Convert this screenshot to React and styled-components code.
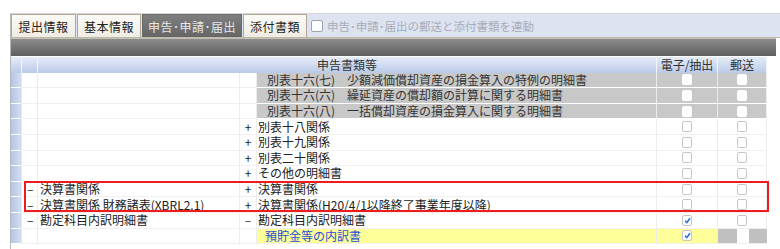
import React from 'react';
import styled, { createGlobalStyle } from 'styled-components';

const GlobalStyle = createGlobalStyle`
  html, body {
    margin: 0;
    padding: 0;
    background: #ffffff;
  }
  body {
    font-family: "Noto Sans CJK JP", "Noto Sans", sans-serif;
    font-size: 12px;
    color: #222;
  }
`;

const Frame = styled.div`
  width: 780px;
  height: 249px;
  overflow: hidden;
  padding: 13px 0 0 10px;
  box-sizing: border-box;
`;

const Panel = styled.div`
  border-top: 1px solid #d6d6d6;
  border-left: 1px solid #b8b8b8;
  height: 240px;
`;

const TabBar = styled.div`
  display: flex;
  align-items: flex-end;
  height: 23px;
  background: #dde3f1;
  border-bottom: 1px solid #bdb8aa;
`;

const Tab = styled.div`
  display: flex;
  align-items: center;
  justify-content: center;
  box-sizing: border-box;
  height: 23px;
  width: ${(p) => p.$w}px;
  margin-right: 1px;
  border: 1px solid ${(p) => (p.$active ? '#6a6a6a' : '#b0a894')};
  border-bottom: none;
  background: ${(p) => (p.$active ? 'linear-gradient(#7e7e7e, #666)' : 'linear-gradient(#fbfaf6, #efece4)')};
  color: ${(p) => (p.$active ? '#e6e6e6' : '#222')};
  font-size: 12px;
  letter-spacing: 0.5px;
`;

const LinkCheck = styled.label`
  display: flex;
  align-items: center;
  gap: 4px;
  height: 23px;
  margin-left: 3px;
  color: #a8adb8;
  font-size: 11.5px;
`;

const SmallBox = styled.span`
  width: 10px;
  height: 10px;
  border: 1px solid #9ca3b0;
  border-radius: 2px;
  background: #fff;
`;

const DarkBar = styled.div`
  height: 17px;
  margin-right: 4px;
  background: linear-gradient(#8c8c8c, #5f5f5f);
  border-top: 1px solid #c4c0b4;
`;

const Table = styled.div`
  position: relative;
  margin-top: 1px;
  display: grid;
  grid-template-columns: 11px 16px 202px 17px 400px 61px 49px;
  grid-auto-rows: 15.6px;
  width: 756px;
  line-height: 14px;
`;

const HeadCell = styled.div`
  grid-column: ${(p) => p.$span || 'auto'};
  display: flex;
  align-items: center;
  justify-content: center;
  background: linear-gradient(#e6ecf7, #b9cae8);
  border-right: 1px solid #f2f5fb;
  color: #333;
  font-size: 12px;
  line-height: 12px;
  box-sizing: border-box;
`;

const Marker = styled.div`
  background: linear-gradient(90deg, #b2c4e6, #d3def2);
  border-right: 1px solid #e0e6f2;
  border-bottom: 1px solid #ffffff;
  box-sizing: border-box;
`;

const Cell = styled.div`
  display: flex;
  align-items: center;
  box-sizing: border-box;
  padding-left: ${(p) => p.$pad || 0}px;
  justify-content: ${(p) => (p.$center ? 'center' : 'flex-start')};
  background: ${(p) => p.$bg || '#ffffff'};
  border-right: 1px solid #ececec;
  border-bottom: 1px solid ${(p) => (p.$bg === '#c8c8c8' ? '#ffffff' : '#f0f0f0')};
  color: ${(p) => p.$color || '#222'};
  white-space: nowrap;
  font-size: 12px;
`;

const Box = styled.span`
  position: relative;
  width: 10px;
  height: 11px;
  box-sizing: border-box;
  border: 1px solid ${(p) => (p.$plain ? '#ffffff' : '#c6c6c6')};
  border-radius: 2px;
  background: #fff;
`;

const Tick = styled.svg`
  position: absolute;
  left: 1px;
  top: 1px;
`;

const MailBlock = styled.div`
  display: flex;
  justify-content: center;
  background: #c0c0c0;
  border-bottom: 1px solid #f0f0f0;
  box-sizing: border-box;
`;

const MailInner = styled.span`
  width: 12px;
  height: 100%;
  background: #fff;
`;

const RedBox = styled.div`
  position: absolute;
  left: 13px;
  top: 124px;
  width: 745px;
  height: 31px;
  border: 2px solid #ee1c1c;
  box-sizing: border-box;
  pointer-events: none;
`;

const rows = [
  { kind: 'gray', main: '別表十六(七)\u3000少額減価償却資産の損金算入の特例の明細書' },
  { kind: 'gray', main: '別表十六(六)\u3000繰延資産の償却額の計算に関する明細書' },
  { kind: 'gray', main: '別表十六(八)\u3000一括償却資産の損金算入に関する明細書' },
  { sign: '+', main: '別表十八関係' },
  { sign: '+', main: '別表十九関係' },
  { sign: '+', main: '別表二十関係' },
  { sign: '+', main: 'その他の明細書' },
  { left: '決算書関係', sign: '+', main: '決算書関係' },
  { left: '決算書関係 財務諸表(XBRL2.1)', sign: '+', main: '決算書関係(H20/4/1以降終了事業年度以降)' },
  { left: '勘定科目内訳明細書', sign: '–', main: '勘定科目内訳明細書', checked: true },
  { kind: 'yellow', main: '預貯金等の内訳書', checked: true },
];

function Check({ checked, plain }) {
  return (
    <Box $plain={plain}>
      {checked && (
        <Tick width="7" height="7" viewBox="0 0 7 7">
          <path d="M1 3.8 L2.8 5.6 L6 1.2" fill="none" stroke="#2a6fe0" strokeWidth="1.6" />
        </Tick>
      )}
    </Box>
  );
}

function Row({ row }) {
  const gray = row.kind === 'gray';
  const yellow = row.kind === 'yellow';
  const bg = gray ? '#c8c8c8' : yellow ? '#ffff99' : '#ffffff';
  return (
    <>
      <Marker />
      <Cell $pad={5}>{row.left && '–'}</Cell>
      <Cell $pad={2}>{row.left}</Cell>
      <Cell $center>{row.sign}</Cell>
      <Cell $bg={gray || yellow ? bg : undefined} $pad={gray ? 10 : yellow ? 8 : 1} $color={yellow ? '#1f4fd6' : gray ? '#333' : undefined}>
        {row.main}
      </Cell>
      <Cell $center $bg={gray || yellow ? bg : undefined}>
        <Check checked={row.checked} plain={gray} />
      </Cell>
      {yellow ? (
        <MailBlock>
          <MailInner />
        </MailBlock>
      ) : (
        <Cell $center $bg={gray ? bg : undefined}>
          <Check plain={gray} />
        </Cell>
      )}
    </>
  );
}

export default function App() {
  return (
    <>
      <GlobalStyle />
      <Frame>
        <Panel>
          <TabBar>
            <Tab $w={65}>提出情報</Tab>
            <Tab $w={64}>基本情報</Tab>
            <Tab $w={100} $active>申告･申請･届出</Tab>
            <Tab $w={64}>添付書類</Tab>
            <LinkCheck>
              <SmallBox />
              申告･申請･届出の郵送と添付書類を連動
            </LinkCheck>
          </TabBar>
          <DarkBar />
          <Table>
            <HeadCell />
            <HeadCell />
            <HeadCell $span="span 3">申告書類等</HeadCell>
            <HeadCell>電子/抽出</HeadCell>
            <HeadCell>郵送</HeadCell>
            {rows.map((row, i) => (
              <Row key={i} row={row} />
            ))}
            <RedBox />
          </Table>
        </Panel>
      </Frame>
    </>
  );
}
